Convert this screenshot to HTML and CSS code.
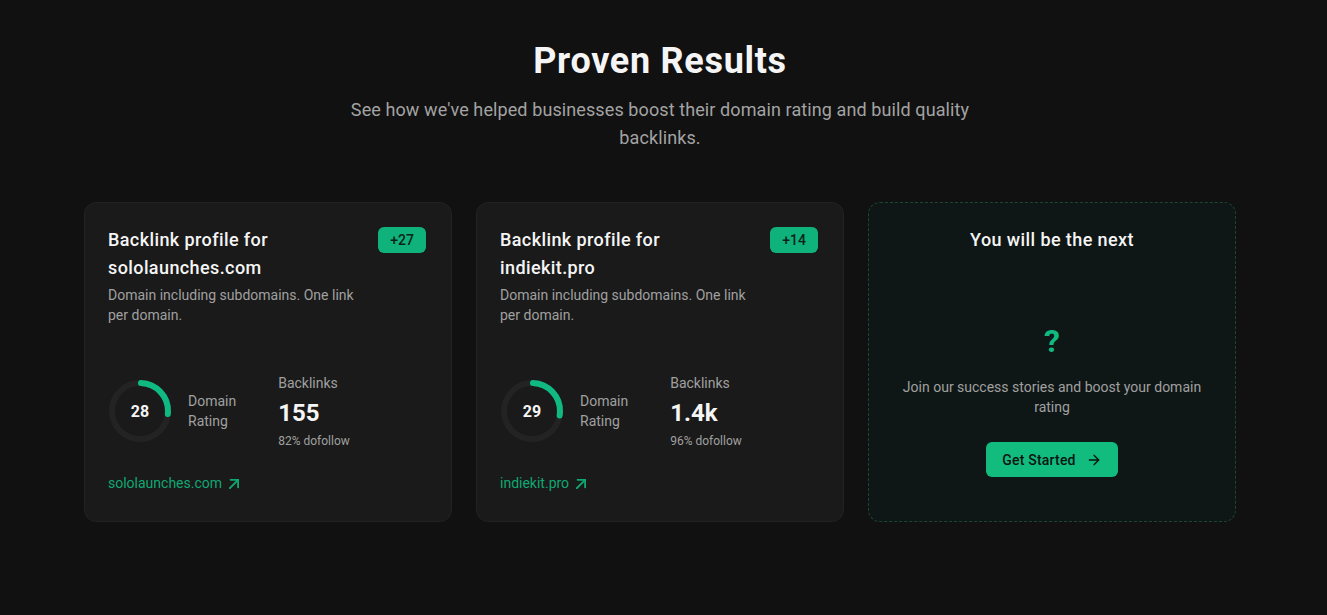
FILE: index.html
```html
<!DOCTYPE html>
<html lang="en">
<head>
<meta charset="utf-8">
<title>Proven Results</title>
<link rel="stylesheet" href="styles.css">
</head>
<body>
<main class="page">
  <section class="results">
    <h1 class="results-title">Proven Results</h1>
    <p class="results-sub">See how we've helped businesses boost their domain rating and build quality backlinks.</p>

    <div class="cards">
      <article class="card">
        <div class="card-head">
          <div class="card-head-text">
            <h3 class="card-title">Backlink profile for sololaunches.com</h3>
            <p class="card-desc">Domain including subdomains. One link per domain.</p>
          </div>
          <span class="badge">+27</span>
        </div>
        <div class="stats">
          <div class="dr">
            <div class="ring">
              <svg width="64" height="64" viewBox="0 0 64 64">
                <circle cx="32" cy="32" r="28" fill="none" stroke="#232323" stroke-width="6"/>
                <circle cx="32" cy="32" r="28" fill="none" stroke="#10b981" stroke-width="6" stroke-linecap="round" stroke-dasharray="46 176" transform="rotate(-88 32 32)"/>
              </svg>
              <span class="ring-num">28</span>
            </div>
            <span class="dr-label">Domain<br>Rating</span>
          </div>
          <div class="bl">
            <span class="bl-label">Backlinks</span>
            <span class="bl-value">155</span>
            <span class="bl-sub">82% dofollow</span>
          </div>
        </div>
        <a class="site-link" href="#">sololaunches.com
          <svg class="ext" width="10" height="10" viewBox="6 6 12 12" fill="none" stroke="currentColor" stroke-width="2.3" stroke-linecap="round" stroke-linejoin="round"><path d="M7 17 17 7"/><path d="M8 7h9v9"/></svg>
        </a>
      </article>

      <article class="card">
        <div class="card-head">
          <div class="card-head-text">
            <h3 class="card-title">Backlink profile for indiekit.pro</h3>
            <p class="card-desc">Domain including subdomains. One link per domain.</p>
          </div>
          <span class="badge">+14</span>
        </div>
        <div class="stats">
          <div class="dr">
            <div class="ring">
              <svg width="64" height="64" viewBox="0 0 64 64">
                <circle cx="32" cy="32" r="28" fill="none" stroke="#232323" stroke-width="6"/>
                <circle cx="32" cy="32" r="28" fill="none" stroke="#10b981" stroke-width="6" stroke-linecap="round" stroke-dasharray="47.5 176" transform="rotate(-88 32 32)"/>
              </svg>
              <span class="ring-num">29</span>
            </div>
            <span class="dr-label">Domain<br>Rating</span>
          </div>
          <div class="bl">
            <span class="bl-label">Backlinks</span>
            <span class="bl-value">1.4k</span>
            <span class="bl-sub">96% dofollow</span>
          </div>
        </div>
        <a class="site-link" href="#">indiekit.pro
          <svg class="ext" width="10" height="10" viewBox="6 6 12 12" fill="none" stroke="currentColor" stroke-width="2.3" stroke-linecap="round" stroke-linejoin="round"><path d="M7 17 17 7"/><path d="M8 7h9v9"/></svg>
        </a>
      </article>

      <article class="card card-next">
        <h3 class="card-title next-title">You will be the next</h3>
        <div class="next-body">
          <span class="next-q">?</span>
          <p class="next-text">Join our success stories and boost your domain rating</p>
          <a class="btn" href="#">Get Started
            <svg width="16" height="16" viewBox="0 0 24 24" fill="none" stroke="currentColor" stroke-width="2" stroke-linecap="round" stroke-linejoin="round"><path d="M5 12h14"/><path d="m12 5 7 7-7 7"/></svg>
          </a>
        </div>
      </article>
    </div>
  </section>
</main>
</body>
</html>
```

FILE: styles.css
```css
* { box-sizing: border-box; }

html, body {
  margin: 0;
  padding: 0;
  background: #111111;
}

body {
  font-family: Roboto, "Noto Sans", "Liberation Sans", sans-serif;
  color: #f5f5f5;
  height: 615px;
  overflow: hidden;
}

.page {
  width: 1320px;
}

.results {
  padding-top: 41px;
  display: flex;
  flex-direction: column;
  align-items: center;
}

.results-title {
  margin: 0;
  font-size: 36px;
  line-height: 40px;
  font-weight: 700;
  letter-spacing: 0.7px;
  color: #f5f5f5;
}

.results-sub {
  margin: 15px 0 0;
  max-width: 640px;
  text-align: center;
  font-size: 18px;
  line-height: 28px;
  letter-spacing: 0.1px;
  color: #a3a3a3;
}

.cards {
  margin-top: 50px;
  width: 1152px;
  display: grid;
  grid-template-columns: repeat(3, 1fr);
  gap: 24px;
}

.card {
  background: #1a1a1a;
  border: 1px solid #222222;
  border-radius: 12px;
  padding: 23px;
  height: 320px;
  display: flex;
  flex-direction: column;
}

.card-head {
  display: flex;
  justify-content: space-between;
  align-items: flex-start;
  gap: 16px;
}

.card-head-text {
  flex: 1;
  max-width: 256px;
}

.card-title {
  margin: 0;
  font-size: 18px;
  line-height: 28px;
  font-weight: 500;
  letter-spacing: 0.4px;
  color: #f5f5f5;
}

.card-head-text .card-title {
  max-width: 250px;
}

.card-desc {
  margin: 3px 0 0;
  font-size: 14px;
  line-height: 20px;
  color: #a0a0a0;
}

.badge {
  flex: none;
  margin-top: 1px;
  margin-right: 2px;
  width: 48px;
  height: 26px;
  border-radius: 6px;
  background: #0fb27a;
  color: #0c2219;
  font-size: 14px;
  font-weight: 500;
  display: flex;
  align-items: center;
  justify-content: center;
}

.stats {
  margin-top: 48px;
  display: flex;
  align-items: center;
  gap: 42px;
}

.dr {
  display: flex;
  align-items: center;
  gap: 16px;
}

.ring {
  position: relative;
  width: 64px;
  height: 64px;
}

.ring svg { display: block; }

.ring-num {
  position: absolute;
  inset: 0;
  display: flex;
  align-items: center;
  justify-content: center;
  font-size: 16px;
  font-weight: 700;
  color: #f5f5f5;
}

.dr-label {
  font-size: 14px;
  line-height: 20px;
  color: #a0a0a0;
}

.bl {
  display: flex;
  flex-direction: column;
}

.bl-label {
  font-size: 14px;
  line-height: 20px;
  color: #a0a0a0;
}

.bl-value {
  margin-top: 4px;
  font-size: 24px;
  line-height: 32px;
  font-weight: 700;
  color: #f5f5f5;
}

.bl-sub {
  margin-top: 4px;
  font-size: 12px;
  line-height: 16px;
  color: #a0a0a0;
}

.site-link {
  margin-top: 24px;
  display: inline-flex;
  align-items: center;
  gap: 7px;
  align-self: flex-start;
  font-size: 14px;
  line-height: 20px;
  color: #10a872;
  text-decoration: none;
}

.ext {
  margin-top: 2px;
}

.card-next {
  background: #0f1716;
  border: 1px dashed #1c4535;
  align-items: center;
}

.next-title {
  text-align: center;
}

.next-body {
  margin-top: 68px;
  display: flex;
  flex-direction: column;
  align-items: center;
}

.next-q {
  font-size: 32px;
  line-height: 38px;
  font-weight: 700;
  color: #10b981;
}

.next-text {
  margin: 17px 0 0;
  max-width: 300px;
  text-align: center;
  font-size: 14px;
  line-height: 20px;
  color: #a0a0a0;
}

.btn {
  margin-top: 25px;
  height: 35px;
  padding: 0 16px;
  display: inline-flex;
  align-items: center;
  gap: 10px;
  border-radius: 6px;
  background: #12bb7e;
  color: #0a1410;
  font-size: 14px;
  font-weight: 500;
  letter-spacing: 0.2px;
  text-decoration: none;
}
```
